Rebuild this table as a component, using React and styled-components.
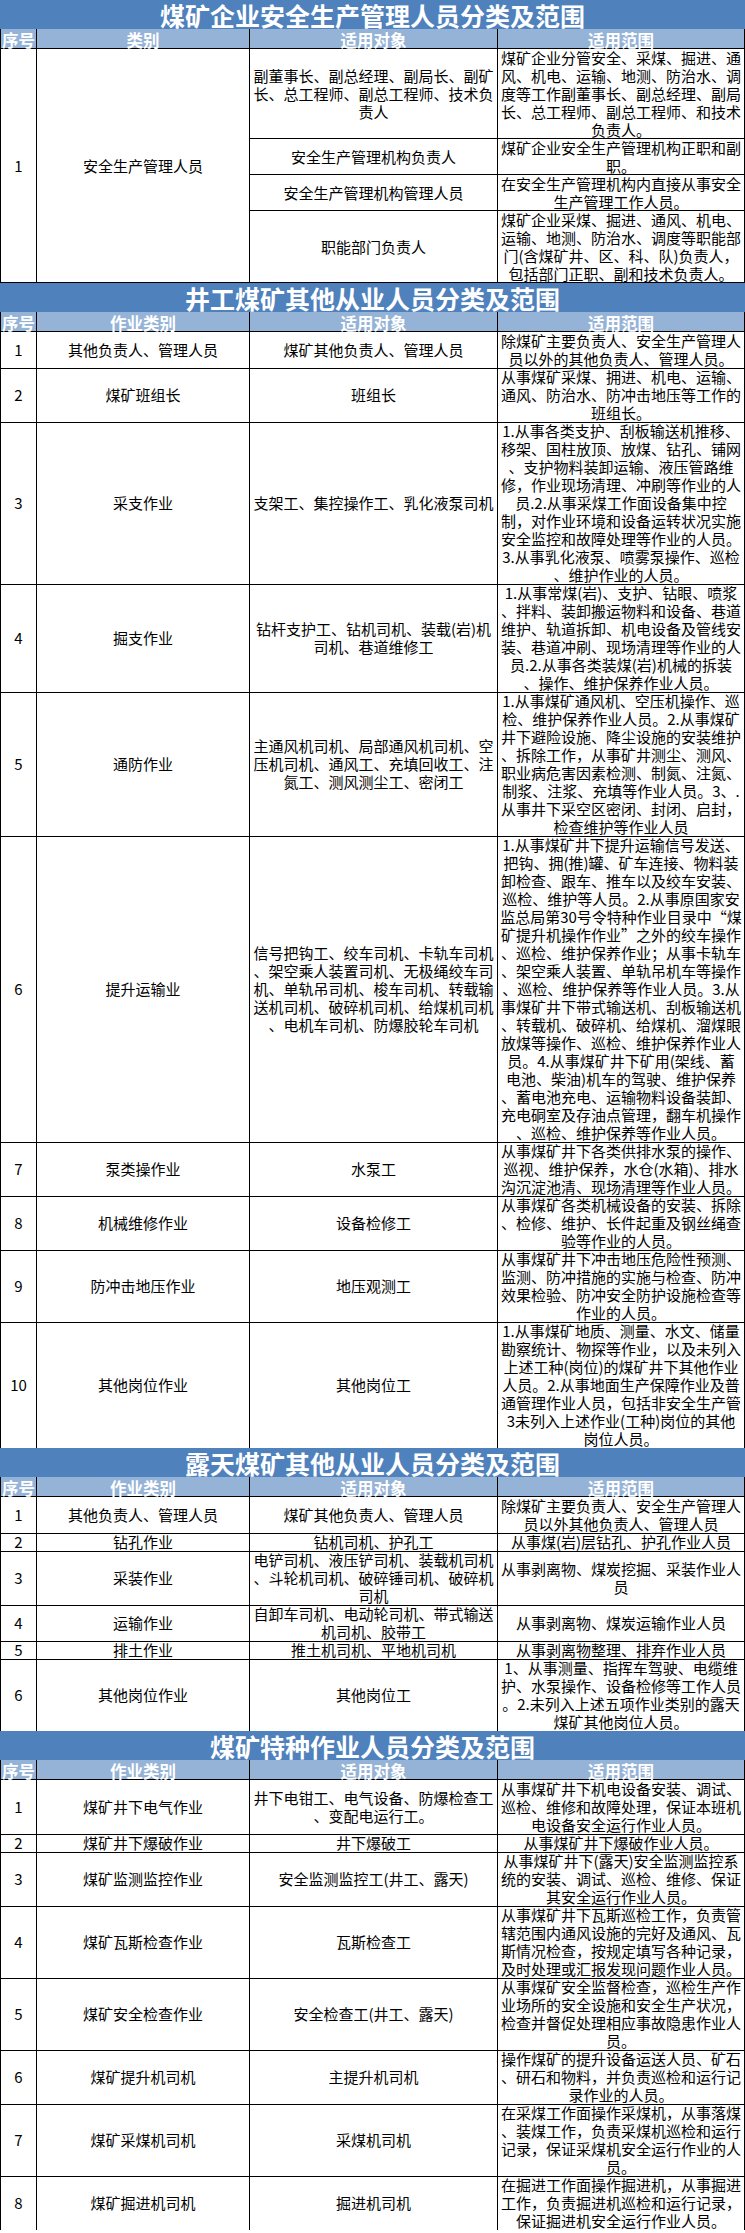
import React from "react";
import styled, { createGlobalStyle } from "styled-components";

const Global = createGlobalStyle`
  html, body { margin: 0; padding: 0; background: #ffffff; }
  body { font-family: "Noto Sans CJK SC", "Noto Sans", sans-serif; color: #000; }
`;

const LINE = 18;
const COLS = "37px 213px 248px 247px";

const Page = styled.div`
  width: 745px;
  display: flex;
  flex-direction: column;
`;

const Title = styled.div`
  height: 29px;
  box-sizing: border-box;
  padding-top: 2px;
  background: #4f81bd;
  color: #ffffff;
  font-size: 25px;
  font-weight: 700;
  line-height: 27px;
  text-align: center;
  white-space: nowrap;
`;

const HeadRow = styled.div`
  display: grid;
  grid-template-columns: ${COLS};
  height: 20px;
  background: #95b3d7;
`;

const HeadCell = styled.div`
  box-sizing: border-box;
  border-right: 1px solid #000;
  border-bottom: 1px solid #000;
  color: #ffffff;
  font-size: 16.5px;
  font-weight: 700;
  line-height: 16px;
  padding-top: 3px;
  text-align: center;
  white-space: nowrap;
  &:first-child { border-left: 1px solid #000; }
`;

const Row = styled.div`
  display: grid;
  grid-template-columns: ${COLS};
  height: ${(p) => p.$lines * LINE}px;
`;

const GroupGrid = styled.div`
  display: grid;
  grid-template-columns: ${COLS};
  grid-template-rows: 90px 36px 36px 72px;
`;

const Cell = styled.div`
  box-sizing: border-box;
  display: flex;
  align-items: center;
  justify-content: center;
  border-right: 1px solid #000;
  border-bottom: 1px solid #000;
  ${(p) => (p.$first ? "border-left: 1px solid #000;" : "")}
  ${(p) => (p.$span ? `grid-row: span ${p.$span};` : "")}
  font-size: 15px;
  line-height: ${LINE}px;
  text-align: center;
  white-space: pre;
`;

const Lines = styled.span`
  display: block;
`;

const Text = ({ children }) => <Lines>{children}</Lines>;

const countLines = (s) => s.split("\n").length;

const Header = ({ labels }) => (
  <HeadRow>
    {labels.map((l) => (
      <HeadCell key={l}>{l}</HeadCell>
    ))}
  </HeadRow>
);

const DataRow = ({ cells }) => {
  const lines = Math.max(...cells.map(countLines));
  return (
    <Row $lines={lines}>
      {cells.map((c, i) => (
        <Cell key={i} $first={i === 0}>
          <Text>{c}</Text>
        </Cell>
      ))}
    </Row>
  );
};

const Section = ({ title, labels, rows }) => (
  <>
    <Title>{title}</Title>
    <Header labels={labels} />
    {rows.map((r, i) => (
      <DataRow key={i} cells={r} />
    ))}
  </>
);

const group1 = [
  [
    "副董事长、副总经理、副局长、副矿\n长、总工程师、副总工程师、技术负\n责人",
    "煤矿企业分管安全、采煤、掘进、通\n风、机电、运输、地测、防治水、调\n度等工作副董事长、副总经理、副局\n长、总工程师、副总工程师、和技术\n负责人。",
  ],
  ["安全生产管理机构负责人", "煤矿企业安全生产管理机构正职和副\n职。"],
  ["安全生产管理机构管理人员", "在安全生产管理机构内直接从事安全\n生产管理工作人员。"],
  [
    "职能部门负责人",
    "煤矿企业采煤、掘进、通风、机电、\n运输、地测、防治水、调度等职能部\n门(含煤矿井、区、科、队)负责人，\n包括部门正职、副和技术负责人。",
  ],
];

const labels2 = ["序号", "作业类别", "适用对象", "适用范围"];

const rows2 = [
  ["1", "其他负责人、管理人员", "煤矿其他负责人、管理人员", "除煤矿主要负责人、安全生产管理人\n员以外的其他负责人、管理人员。"],
  ["2", "煤矿班组长", "班组长", "从事煤矿采煤、拥进、机电、运输、\n通风、防治水、防冲击地压等工作的\n班组长。"],
  [
    "3",
    "采支作业",
    "支架工、集控操作工、乳化液泵司机",
    "1.从事各类支护、刮板输送机推移、\n移架、国柱放顶、放煤、钻孔、铺网\n、支护物料装卸运输、液压管路维\n修，作业现场清理、冲刷等作业的人\n员.2.从事采煤工作面设备集中控\n制，对作业环境和设备运转状况实施\n安全监控和故障处理等作业的人员。\n3.从事乳化液泵、喷雾泵操作、巡检\n、维护作业的人员。",
  ],
  [
    "4",
    "掘支作业",
    "钻杆支护工、钻机司机、装载(岩)机\n司机、巷道维修工",
    "1.从事常煤(岩)、支护、钻眼、喷浆\n、拌料、装卸搬运物料和设备、巷道\n维护、轨道拆卸、机电设备及管线安\n装、巷道冲刷、现场清理等作业的人\n员.2.从事各类装煤(岩)机械的拆装\n、操作、维护保养作业人员。",
  ],
  [
    "5",
    "通防作业",
    "主通风机司机、局部通风机司机、空\n压机司机、通风工、充填回收工、注\n氮工、测风测尘工、密闭工",
    "1.从事煤矿通风机、空压机操作、巡\n检、维护保养作业人员。2.从事煤矿\n井下避险设施、降尘设施的安装维护\n、拆除工作，从事矿井测尘、测风、\n职业病危害因素检测、制氮、注氮、\n制浆、注浆、充填等作业人员。3、.\n从事井下采空区密闭、封闭、启封，\n检查维护等作业人员",
  ],
  [
    "6",
    "提升运输业",
    "信号把钩工、绞车司机、卡轨车司机\n、架空乘人装置司机、无极绳绞车司\n机、单轨吊司机、梭车司机、转载输\n送机司机、破碎机司机、给煤机司机\n、电机车司机、防爆胶轮车司机",
    "1.从事煤矿井下提升运输信号发送、\n把钩、拥(推)罐、矿车连接、物料装\n卸检查、跟车、推车以及绞车安装、\n巡检、维护等人员。2.从事原国家安\n监总局第30号令特种作业目录中“煤\n矿提升机操作作业”之外的绞车操作\n、巡检、维护保养作业；从事卡轨车\n、架空乘人装置、单轨吊机车等操作\n、巡检、维护保养等作业人员。3.从\n事煤矿井下带式输送机、刮板输送机\n、转载机、破碎机、给煤机、溜煤眼\n放煤等操作、巡检、维护保养作业人\n员。4.从事煤矿井下矿用(架线、蓄\n电池、柴油)机车的驾驶、维护保养\n、蓄电池充电、运输物料设备装卸、\n充电硐室及存油点管理，翻车机操作\n、巡检、维护保养等作业人员。",
  ],
  ["7", "泵类操作业", "水泵工", "从事煤矿井下各类供排水泵的操作、\n巡视、维护保养，水仓(水箱)、排水\n沟沉淀池清、现场清理等作业人员。"],
  ["8", "机械维修作业", "设备检修工", "从事煤矿各类机械设备的安装、拆除\n、检修、维护、长件起重及钢丝绳查\n验等作业的人员。"],
  ["9", "防冲击地压作业", "地压观测工", "从事煤矿井下冲击地压危险性预测、\n监测、防冲措施的实施与检查、防冲\n效果检验、防冲安全防护设施检查等\n作业的人员。"],
  [
    "10",
    "其他岗位作业",
    "其他岗位工",
    "1.从事煤矿地质、测量、水文、储量\n勘察统计、物探等作业，以及未列入\n上述工种(岗位)的煤矿井下其他作业\n人员。2.从事地面生产保障作业及普\n通管理作业人员，包括非安全生产管\n3未列入上述作业(工种)岗位的其他\n岗位人员。",
  ],
];

const rows3 = [
  ["1", "其他负责人、管理人员", "煤矿其他负责人、管理人员", "除煤矿主要负责人、安全生产管理人\n员以外其他负责人、管理人员"],
  ["2", "钻孔作业", "钻机司机、护孔工", "从事煤(岩)层钻孔、护孔作业人员"],
  ["3", "采装作业", "电铲司机、液压铲司机、装载机司机\n、斗轮机司机、破碎锤司机、破碎机\n司机", "从事剥离物、煤炭挖掘、采装作业人\n员"],
  ["4", "运输作业", "自卸车司机、电动轮司机、带式输送\n机司机、胶带工", "从事剥离物、煤炭运输作业人员"],
  ["5", "排土作业", "推土机司机、平地机司机", "从事剥离物整理、排弃作业人员"],
  ["6", "其他岗位作业", "其他岗位工", "1、从事测量、指挥车驾驶、电缆维\n护、水泵操作、设备检修等工作人员\n。2.未列入上述五项作业类别的露天\n煤矿其他岗位人员。"],
];

const rows4 = [
  ["1", "煤矿井下电气作业", "井下电钳工、电气设备、防爆检查工\n、变配电运行工。", "从事煤矿井下机电设备安装、调试、\n巡检、维修和故障处理，保证本班机\n电设备安全运行作业人员。"],
  ["2", "煤矿井下爆破作业", "井下爆破工", "从事煤矿井下爆破作业人员。"],
  ["3", "煤矿监测监控作业", "安全监测监控工(井工、露天)", "从事煤矿井下(露天)安全监测监控系\n统的安装、调试、巡检、维修、保证\n其安全运行作业人员。"],
  ["4", "煤矿瓦斯检查作业", "瓦斯检查工", "从事煤矿井下瓦斯巡检工作，负责管\n辖范围内通风设施的完好及通风、瓦\n斯情况检查，按规定填写各种记录，\n及时处理或汇报发现问题作业人员。"],
  ["5", "煤矿安全检查作业", "安全检查工(井工、露天)", "从事煤矿安全监督检查，巡检生产作\n业场所的安全设施和安全生产状况，\n检查并督促处理相应事故隐患作业人\n员。"],
  ["6", "煤矿提升机司机", "主提升机司机", "操作煤矿的提升设备运送人员、矿石\n、研石和物料，并负责巡检和运行记\n录作业的人员。"],
  ["7", "煤矿采煤机司机", "采煤机司机", "在采煤工作面操作采煤机，从事落煤\n、装煤工作，负责采煤机巡检和运行\n记录，保证采煤机安全运行作业的人\n员。"],
  ["8", "煤矿掘进机司机", "掘进机司机", "在掘进工作面操作掘进机，从事掘进\n工作，负责掘进机巡检和运行记录，\n保证掘进机安全运行作业人员。"],
];

export default function App() {
  return (
    <Page>
      <Global />
      <Title>煤矿企业安全生产管理人员分类及范围</Title>
      <Header labels={["序号", "类别", "适用对象", "适用范围"]} />
      <GroupGrid>
        <Cell $first $span={4}>
          <Text>1</Text>
        </Cell>
        <Cell $span={4}>
          <Text>安全生产管理人员</Text>
        </Cell>
        {group1.map(([obj, scope], i) => (
          <React.Fragment key={i}>
            <Cell>
              <Text>{obj}</Text>
            </Cell>
            <Cell>
              <Text>{scope}</Text>
            </Cell>
          </React.Fragment>
        ))}
      </GroupGrid>
      <Section title="井工煤矿其他从业人员分类及范围" labels={labels2} rows={rows2} />
      <Section title="露天煤矿其他从业人员分类及范围" labels={labels2} rows={rows3} />
      <Section title="煤矿特种作业人员分类及范围" labels={labels2} rows={rows4} />
    </Page>
  );
}
